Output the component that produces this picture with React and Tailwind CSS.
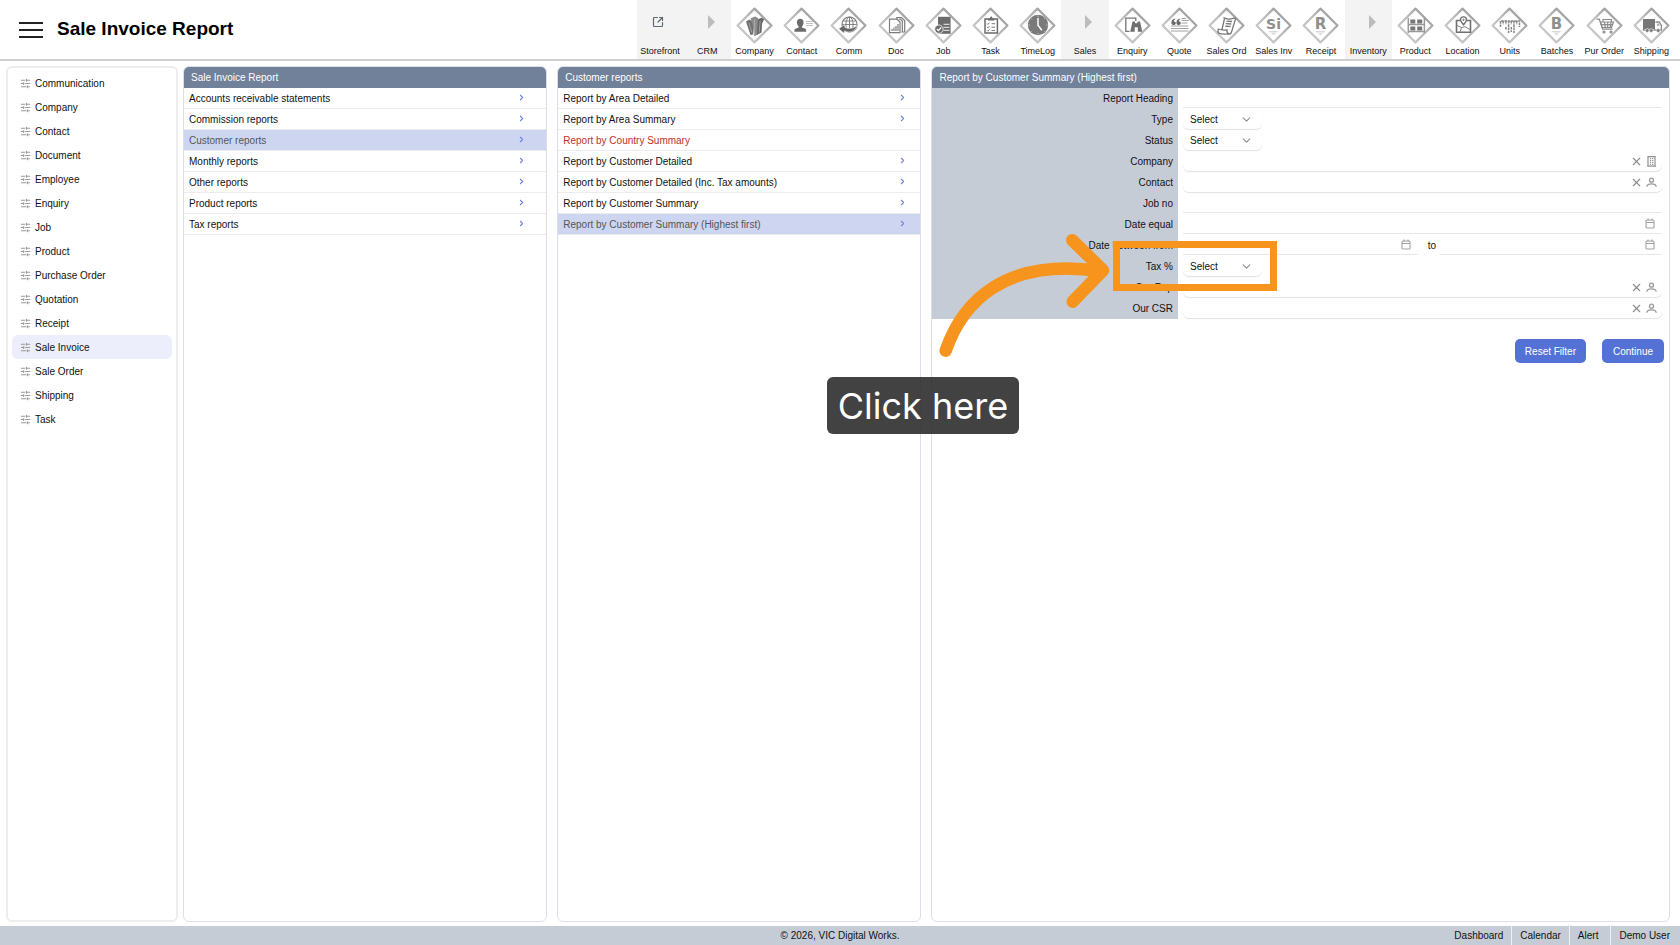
import { ChevronDown, ChevronRight, SlidersHorizontal, X, SquareArrowOutUpRight } from "lucide-react";

const GLYPHS = {
  Company: (
    <g>
      <path d="M10 14.500l3.500-2 3.500 2.500v12.500l-2.500.5z" fill="#707070" />
      <path d="M14.500 11.500l4.500-2 3 1.500v16.500l-4 1.800-1.500-12z" fill="#8a8a8a" />
      <path d="M22 12.300l3.600-1.600 2.500 1.500-2 4.300-.6 9-4.500 2.300z" fill="#666" />
      <path d="M13 15.500l2.800 10M18.600 12v16M24.200 13.500l-1 12" stroke="#c4c4c4" strokeWidth=".6" />
    </g>
  ),
  Contact: (
    <g fill="#6b6b6b">
      <path d="M17.200 11.800c2.200 0 3.400 1.500 3.400 3.600 0 1.800-.8 3.200-1.600 3.900v1.200l3.200 1.300c.8.4 1 1 1 2.900H11.400c0-1.900.2-2.500 1-2.900l3.200-1.300v-1.200c-.8-.7-1.700-2.100-1.700-3.900 0-2.100 1.200-3.600 3.300-3.600z" />
      <path d="M23 14.500h7M23 16.500h7M23 18.500h7" stroke="#c2c2c2" />
    </g>
  ),
  Comm: (
    <g fill="none" stroke="#777">
      <circle cx="19.500" cy="17.500" r="7.500" strokeWidth="1.200" />
      <ellipse cx="19.500" cy="17.500" rx="3.600" ry="7.500" strokeWidth=".9" />
      <path d="M12.400 17.500h14M13.300 14h12.400M19.500 10.200v14.600" strokeWidth=".9" />
      <path d="M8.800 21.800l5.800-4.200.2 2.600c3.200 2 8.200 1.600 12.200-1.700-1.500 5.800-7.500 8.100-12.400 5.300l-.6 2.500z" fill="#666" stroke="#fff" strokeWidth=".5" />
    </g>
  ),
  Doc: (
    <g fill="none" stroke="#7c7c7c" strokeWidth="1.200">
      <path d="M18.800 12v-1.500h4.700l3.200 3V25h-3" />
      <path d="M21 12.200h1.500l1.800 1.800v11.200" />
      <path d="M11.500 12.200h7.500l3 2.800v10.700H11.500z" />
      <path d="M14 24v-2M16 24v-3.500M18 24v-5M20 24v-7" />
    </g>
  ),
  Job: (
    <g>
      <path d="M13 9.800h12.600v17H13z" fill="#6b6b6b" />
      <path d="M18.500 17.300h6M18.500 20.300h6M18.500 23.300h6" stroke="#eee" />
      <circle cx="13.900" cy="22.200" r="4.200" fill="#6b6b6b" stroke="#fff" strokeWidth=".8" />
      <path d="M11.900 22l1.500 1.700 2.800-3.200" fill="none" stroke="#fff" strokeWidth="1.200" />
    </g>
  ),
  Task: (
    <g fill="none" stroke="#6b6b6b">
      <path d="M13 12h12.400v14H13z" strokeWidth="1.500" />
      <path d="M16 13.400v-2h2c0-2.400 2.400-2.400 2.400 0h2v2z" fill="#6b6b6b" stroke="none" />
      <path d="M15 16.500l.9.900 1.500-1.700M15 20l.9.900 1.500-1.700M15 23.300l.9.900 1.500-1.700M19.500 16.700H23M19.500 20.200H23M19.500 23.500H23" strokeWidth=".9" />
    </g>
  ),
  TimeLog: (
    <g>
      <circle cx="19" cy="18" r="10.200" fill="#7a7a7a" />
      <path d="M19 11v7.300l3.800 5" fill="none" stroke="#fff" strokeWidth="1.500" />
      <path d="M19 8.500v1.500M19 26v1.500M9.500 18H11M27 18h1.500M12.300 11.300l.9.900M25.700 11.300l-.9.900M12.300 24.700l.9-.9M25.700 24.700l-.9-.9" stroke="#ddd" strokeWidth=".7" />
    </g>
  ),
  Enquiry: (
    <g>
      <path d="M15.500 24.300h-3.700V11.200h10v2.800" fill="none" stroke="#777" strokeWidth="1.300" />
      <path d="M18.500 14.500h2.300l.5 1.700h1.900l.5-1.700H26l2.300 10.300h-4.500v-4.600h-3.100v4.600h-4.500z" fill="#6f6f6f" />
    </g>
  ),
  Quote: (
    <g>
      <path d="M14.500 11.500l-.4 1c-1 .4-1.400 1.200-1.300 2.100 1.400 0 2 .7 2 1.700 0 2.400-4.400 2.500-4.400-.9 0-2 1.500-3.600 4.100-3.900zM19.500 11.500l-.4 1c-1 .4-1.400 1.200-1.300 2.100 1.400 0 2 .7 2 1.700 0 2.400-4.400 2.500-4.400-.9 0-2 1.500-3.600 4.100-3.900z" fill="#666" />
      <path d="M20.500 11.500H25M20.500 13.500h7M20.500 16h6M10 19h17.500M10 21.500h17.500M10 24h17.500" stroke="#a2a2a2" strokeWidth="1.200" />
    </g>
  ),
  "Sales Ord": (
    <g fill="none" stroke="#777" strokeWidth="1.300">
      <path d="M15.500 10.500c2 1.300 6.500 2 10.500.6 1.500-.3 2 .9 1.200 2L23.500 25c-.6 2-2.200 2.200-3.400 1.700" />
      <path d="M16.500 11.500L14 22.500M10.200 22c3.300 1.200 6.300 1.300 8.800.8-.3 2 .3 3.400 1.800 4-3.500.7-7.200.4-10-.6-1-.9-1.100-2.600-.6-4.200z" />
      <path d="M18.500 14.200l5.500.3M17.800 16.700l5.500.3M17.200 19.200l5.300.3" />
    </g>
  ),
  Product: (
    <g>
      <path d="M11.300 11v15M27.400 11v15M11.300 17.600h16M11.300 24.600h16" stroke="#999" strokeWidth="1.500" />
      <path d="M13.300 12.500h5v4h-5zM20.200 12.500h5v4h-5zM13.300 19.500h5v4h-5zM20.200 19.500h5v4h-5z" fill="#777" />
    </g>
  ),
  Location: (
    <g fill="none" stroke="#707070">
      <path d="M16 13.500h-3.500v11.700h14V13.500H23" strokeWidth="1.600" />
      <path d="M19.500 17.800c-2.600-3.100-3-4.100-3-5 0-3.900 6-3.900 6 0 0 .9-.4 1.900-3 5z" fill="#fff" strokeWidth="1.400" />
      <circle cx="19.500" cy="12.800" r=".7" />
      <path d="M13 18.500l4.500 2 3.500-.8 5 3M17.500 20.500L16 25" strokeWidth=".9" />
    </g>
  ),
  Units: (
    <path d="M9.500 20v-6h19v6M12.200 14v3.500M14.900 14v3.500M17.600 14v12M20.300 14v3.500M23 14v12M25.700 14v3.500M14.900 20v3M20.300 20v5" fill="none" stroke="#858585" strokeWidth="1.500" strokeDasharray="2.600 .7" />
  ),
  "Pur Order": (
    <g fill="none" stroke="#8a8a8a" strokeWidth="1.200">
      <path d="M10.500 12.200h2.800l3.300 10h10" />
      <path d="M14.500 15h13l-2 5.500h-9.300z" />
      <path d="M17 15v-2.500h8.500V15M16 17.700h10.300M18.500 15l.8 5.500M21.700 15v5.500M25 15l-.8 5.500" />
      <circle cx="18" cy="25" r="1" />
      <circle cx="25" cy="25" r="1" />
    </g>
  ),
  Shipping: (
    <g>
      <path d="M10 12h12v10H10z" fill="#777" />
      <path d="M22.500 15h3.700l2.200 3.500V23h-18v-1" fill="none" stroke="#8a8a8a" strokeWidth="1.300" />
      <path d="M24 16.500h1.800l1.200 2.300h-3z" fill="#aaa" />
      <circle cx="14.200" cy="23.500" r="1.900" fill="#777" stroke="#fff" strokeWidth=".6" />
      <circle cx="18.200" cy="23.500" r="1.900" fill="#777" stroke="#fff" strokeWidth=".6" />
      <circle cx="25.200" cy="23.500" r="1.900" fill="#777" stroke="#fff" strokeWidth=".6" />
    </g>
  ),
};

const LETTERS = { "Sales Inv": "Si", Receipt: "R", Batches: "B" };

const NAV = [
  "Storefront", "CRM", "Company", "Contact", "Comm", "Doc", "Job", "Task", "TimeLog", "Sales", "Enquiry",
  "Quote", "Sales Ord", "Sales Inv", "Receipt", "Inventory", "Product", "Location", "Units", "Batches",
  "Pur Order", "Shipping",
];
const GROUPS = ["CRM", "Sales", "Inventory"];

function DiamondIcon({ name }) {
  const letter = LETTERS[name];
  return (
    <svg width="37" height="37" viewBox="0 0 37 37" aria-hidden="true">
      <defs>
        <linearGradient id="edge" x1="0" y1="1" x2="1" y2="0">
          <stop offset="0" stopColor="#cfcfcf" />
          <stop offset=".5" stopColor="#bdbdbd" />
          <stop offset="1" stopColor="#8c8c8c" />
        </linearGradient>
      </defs>
      <path d="M18.500 1.600L35.400 18.500 18.500 35.400 1.600 18.500z" fill="#fff" stroke="url(#edge)" strokeWidth="2.200" strokeLinejoin="round" />
      {letter ? (
        <g>
          <text x="18.500" y="21.500" textAnchor="middle" fontSize={letter === "Si" ? 14 : 15} fontWeight="700" fill="#8f8f8f" fontFamily="DejaVu Sans, sans-serif">
            {letter}
          </text>
          <path d="M13.500 24h10l-1.500 1.500h-7zM16 26.300h5l-2.500 2z" fill="#d8d8d8" />
        </g>
      ) : (
        GLYPHS[name]
      )}
    </svg>
  );
}

function NavItem({ name }) {
  const shaded = name === "Storefront" || GROUPS.includes(name);
  return (
    <a href="#" className={`flex flex-col items-center pt-[7px] ${shaded ? "bg-[#f3f3f3]" : ""}`}>
      <span className="flex h-[37px] items-center justify-center">
        {name === "Storefront" ? (
          <SquareArrowOutUpRight size={12} strokeWidth={2.4} className="mr-1 mb-2 text-[#5f6873]" />
        ) : GROUPS.includes(name) ? (
          <svg width="7" height="14" viewBox="0 0 7 14" className="mb-2 ml-2" aria-hidden="true">
            <path d="M0 0l7 7-7 7z" fill="#bcbcbc" />
          </svg>
        ) : (
          <DiamondIcon name={name} />
        )}
      </span>
      <span className="text-[9px] leading-[14px] whitespace-nowrap text-[#111]">{name}</span>
    </a>
  );
}

const SIDEBAR = [
  "Communication", "Company", "Contact", "Document", "Employee", "Enquiry", "Job", "Product",
  "Purchase Order", "Quotation", "Receipt", "Sale Invoice", "Sale Order", "Shipping", "Task",
];

const REPORTS = [
  { name: "Accounts receivable statements" },
  { name: "Commission reports" },
  { name: "Customer reports", active: true },
  { name: "Monthly reports" },
  { name: "Other reports" },
  { name: "Product reports" },
  { name: "Tax reports" },
];

const CUSTOMER_REPORTS = [
  { name: "Report by Area Detailed" },
  { name: "Report by Area Summary" },
  { name: "Report by Country Summary", locked: true },
  { name: "Report by Customer Detailed" },
  { name: "Report by Customer Detailed (Inc. Tax amounts)" },
  { name: "Report by Customer Summary" },
  { name: "Report by Customer Summary (Highest first)", active: true },
];

function Panel({ title, children }) {
  return (
    <section className="flex flex-col overflow-hidden rounded-md border border-[#dbe0e8]">
      <h2 className="-mx-px -mt-px h-[22px] shrink-0 bg-[#708199] pl-2 text-[10px] leading-[23px] text-white">{title}</h2>
      {children}
    </section>
  );
}

function ReportList({ items, inset }) {
  return (
    <ul>
      {items.map((item) => (
        <li key={item.name} className="border-b border-[#ececec]">
          <a
            href="#"
            className={`flex h-5 items-center justify-between pl-[5px] text-[10px] ${inset} ${
              item.active ? "bg-[#ced5f1] text-[#555]" : item.locked ? "text-[#b8322a]" : "text-[#111]"
            }`}
          >
            {item.name}
            {!item.locked && <ChevronRight size={9} strokeWidth={3} className="mb-[2px] text-[#6f86e0]" />}
          </a>
        </li>
      ))}
    </ul>
  );
}

function CalendarIcon() {
  return (
    <svg width="10" height="11" viewBox="0 0 10 11" fill="none" stroke="#a2a2a2" strokeWidth="1.100" aria-hidden="true">
      <rect x="1" y="2" width="8" height="8" rx="1" />
      <path d="M1 4.500h8M3 .500v2M7 .500v2" />
    </svg>
  );
}

function PersonIcon() {
  return (
    <svg width="11" height="11" viewBox="0 0 11 11" fill="none" stroke="#999" strokeWidth="1.300" aria-hidden="true">
      <circle cx="5.500" cy="3.200" r="2" />
      <path d="M.800 9.800c.4-3.800 9-3.800 9.400 0" />
    </svg>
  );
}

function BuildingIcon() {
  return (
    <svg width="11" height="11" viewBox="0 0 11 11" fill="none" stroke="#8f8f8f" strokeWidth="1.200" aria-hidden="true">
      <path d="M2 10.200V.600h7v9.600zM1.200 10.200h8.600" />
      <path d="M4.500 2v7M6.700 2v7" strokeDasharray="1.200 .8" />
    </svg>
  );
}

function PlainField({ id, label, calendar }) {
  return (
    <span className="flex h-5 min-w-0 flex-1 items-center border-b border-[#e8e8e8] pr-[7px]">
      <input id={id} aria-label={label} className="h-full min-w-0 flex-1 bg-transparent text-[10px] outline-none" />
      {calendar && (
        <button type="button" aria-label={`Pick ${label}`}>
          <CalendarIcon />
        </button>
      )}
    </span>
  );
}

function LookupField({ id, label, icon }) {
  return (
    <span className="flex h-5 flex-1 items-center gap-[3px] rounded-md pr-[5px] shadow-[0_1px_1px_#e2e2e2]">
      <input id={id} className="h-full min-w-0 flex-1 bg-transparent text-[10px] outline-none" />
      <button type="button" aria-label={`Clear ${label}`}>
        <X size={13} strokeWidth={2} className="text-[#8a8a8a]" />
      </button>
      <button type="button" aria-label={`Find ${label}`}>
        {icon === "building" ? <BuildingIcon /> : <PersonIcon />}
      </button>
    </span>
  );
}

function SelectField({ id }) {
  return (
    <span className="relative flex h-5 w-[79px] items-center rounded-md shadow-[0_1px_1px_#e2e2e2]">
      <select id={id} className="h-full w-full appearance-none bg-transparent pl-[7px] text-[10px] text-[#111] outline-none">
        <option>Select</option>
      </select>
      <ChevronDown size={13} strokeWidth={2} className="pointer-events-none absolute right-[9px] text-[#8f8f8f]" />
    </span>
  );
}

const FIELDS = [
  { id: "heading", label: "Report Heading", kind: "plain" },
  { id: "type", label: "Type", kind: "select" },
  { id: "status", label: "Status", kind: "select" },
  { id: "company", label: "Company", kind: "lookup", icon: "building" },
  { id: "contact", label: "Contact", kind: "lookup" },
  { id: "job", label: "Job no", kind: "plain" },
  { id: "date", label: "Date equal", kind: "date" },
  { id: "from", label: "Date between from", kind: "range" },
  { id: "tax", label: "Tax %", kind: "select" },
  { id: "rep", label: "Our Rep", kind: "lookup" },
  { id: "csr", label: "Our CSR", kind: "lookup" },
];

function Field({ field }) {
  const { id, label, kind, icon } = field;
  if (kind === "select") return <SelectField id={id} />;
  if (kind === "lookup") return <LookupField id={id} label={label} icon={icon} />;
  if (kind === "range")
    return (
      <>
        <span className="flex w-[49%]">
          <PlainField id={id} label="start date" calendar />
        </span>
        <label htmlFor="until" className="pr-1 pl-[10px] text-[10px] leading-[21px]">to</label>
        <PlainField id="until" calendar />
      </>
    );
  return <PlainField id={id} label={label} calendar={kind === "date"} />;
}

export default function App() {
  return (
    <div className="relative flex min-h-screen flex-col bg-white font-['Liberation_Sans',Arial,sans-serif] text-[#111]">
      <header className="flex h-[61px] items-stretch justify-between border-b-2 border-[#cfcfcf] pr-[5px]">
        <div className="flex items-center gap-[14px] pl-[19px]">
          <button type="button" aria-label="Menu" className="flex w-6 flex-col gap-[5px]">
            <span className="h-[2px] bg-[#222]" />
            <span className="h-[2px] bg-[#222]" />
            <span className="h-[2px] bg-[#222]" />
          </button>
          <h1 className="text-[19px] font-bold text-black">Sale Invoice Report</h1>
        </div>
        <nav className="grid w-[62%] grid-cols-22">
          {NAV.map((name) => (
            <NavItem key={name} name={name} />
          ))}
        </nav>
      </header>

      <main className="flex flex-1 gap-[5px] pt-[5px] pr-[10px] pb-1 pl-[6px]">
        <aside className="w-[172px] shrink-0 rounded-md border-2 border-[#ededed] px-1 pt-[3px]">
          {SIDEBAR.map((name) => (
            <a
              key={name}
              href="#"
              className={`flex h-6 items-center gap-1 rounded-md pl-2 text-[10px] ${name === "Sale Invoice" ? "bg-[#eceffb]" : ""}`}
            >
              <SlidersHorizontal size={11} strokeWidth={2.4} className="text-[#999]" />
              {name}
            </a>
          ))}
        </aside>

        <div className="grid flex-1 grid-cols-[364fr_364fr_738fr] gap-[10px]">
          <Panel title="Sale Invoice Report">
            <ReportList items={REPORTS} inset="pr-5" />
          </Panel>
          <Panel title="Customer reports">
            <ReportList items={CUSTOMER_REPORTS} inset="pr-[13px]" />
          </Panel>
          <Panel title="Report by Customer Summary (Highest first)">
            <form>
              {FIELDS.map((field) => (
                <div key={field.id} className="flex h-[21px]">
                  <label htmlFor={field.id} className="w-1/3 bg-[#c6ccd6] pr-[5px] text-right text-[10px] leading-[22px]">
                    {field.label}
                  </label>
                  <div className="flex flex-1 items-start pr-[7px] pl-[5px]">
                    <Field field={field} />
                  </div>
                </div>
              ))}
              <div className="mt-5 flex justify-end gap-4 pr-[5px]">
                <button type="button" className="h-6 rounded-[5px] bg-[#5472d6] px-[10px] text-[10px] text-white">
                  Reset Filter
                </button>
                <button type="button" className="h-6 rounded-[5px] bg-[#5472d6] px-[11px] text-[10px] text-white">
                  Continue
                </button>
              </div>
            </form>
          </Panel>
        </div>
      </main>

      <footer className="grid h-[19px] grid-cols-3 items-stretch bg-[#c6ccd6] text-[10px] leading-[20px]">
        <p className="col-start-2 text-center">© 2026, VIC Digital Works.</p>
        <nav className="flex justify-end divide-x divide-[#eef0f4]">
          <a href="#" className="px-2">Dashboard</a>
          <a href="#" className="px-2">Calendar</a>
          <a href="#" className="pr-3 pl-2">Alert</a>
          <a href="#" className="pr-[10px] pl-2">Demo User</a>
        </nav>
      </footer>

      <div className="pointer-events-none absolute top-[241px] left-[1113px] h-[50px] w-[164px] border-7 border-[#f7941d]" />
      <svg className="pointer-events-none absolute top-[230px] left-[930px]" width="185" height="135" viewBox="930 230 185 135" fill="none" stroke="#f7941d" strokeWidth="12.500" strokeLinecap="round" strokeLinejoin="round" aria-hidden="true">
        <path d="M945.700 350.700C962 303 1004 257 1100 271" />
        <path d="M1072.300 240.200L1103 270.300 1072.700 301.700" />
      </svg>
      <div className="pointer-events-none absolute top-[377px] left-[827px] flex h-[57px] w-[192px] items-center justify-center rounded-md bg-[#2e2e2e]/90 font-[Inter,sans-serif] text-[36px] text-white">
        Click here
      </div>
    </div>
  );
}
